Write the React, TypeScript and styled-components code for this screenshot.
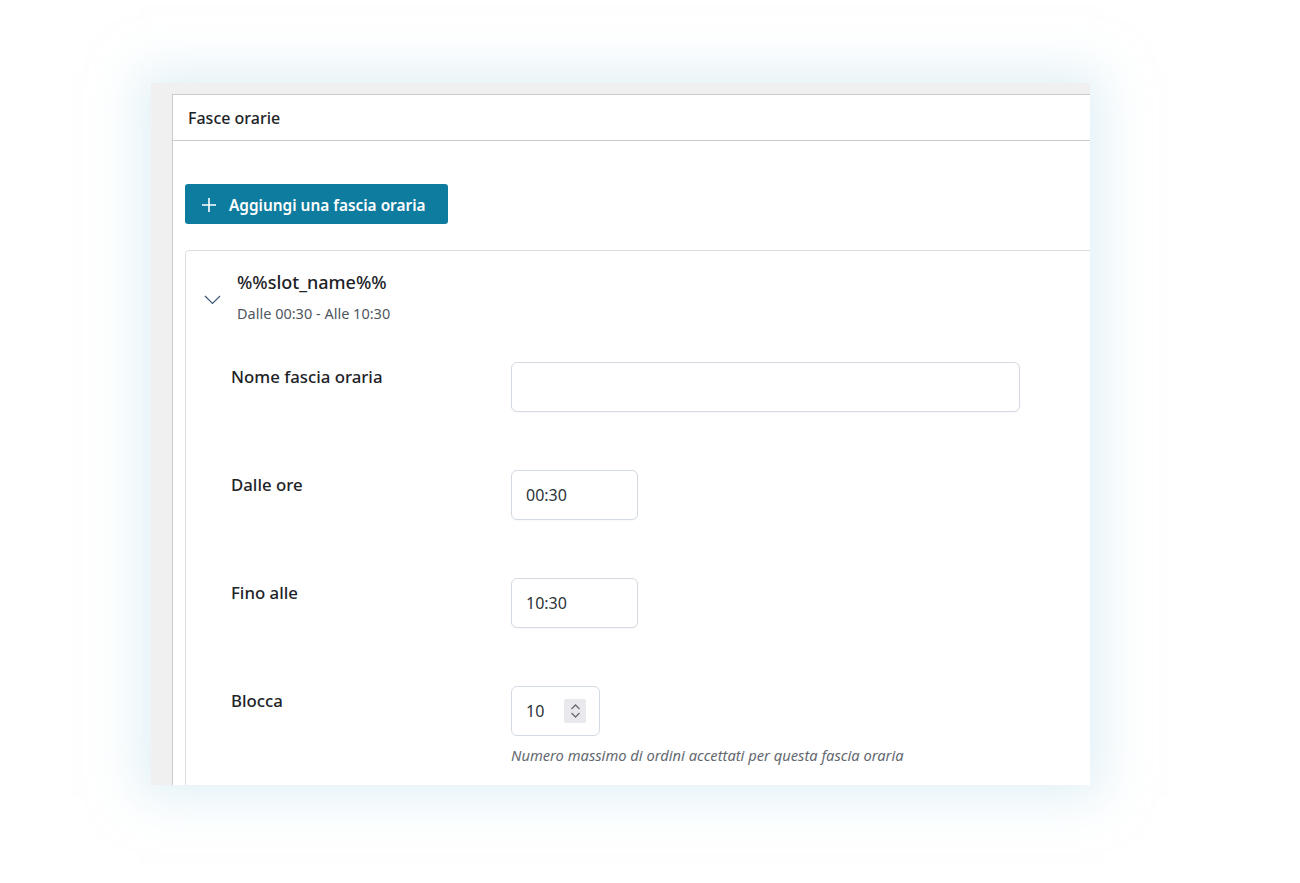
import React from "react";
import styled, { createGlobalStyle } from "styled-components";

const GlobalStyle = createGlobalStyle`
  html, body {
    margin: 0;
    padding: 0;
    background: #ffffff;
  }
  body {
    font-family: "Noto Sans", "Open Sans", sans-serif;
    color: #1d2327;
  }
`;

const Page = styled.div`
  padding: 83px 0 0 151px;
  height: 883px;
  box-sizing: border-box;
`;

const Panel = styled.div`
  width: 939px;
  height: 702px;
  background: #f0f0f1;
  padding: 11px 0 0 21px;
  box-sizing: border-box;
  overflow: hidden;
  box-shadow: 0 0 45px 12px rgba(195, 228, 240, 0.5);
`;

const Box = styled.div`
  width: 1000px;
  height: 100%;
  background: #fff;
  border-top: 1px solid #c9cacc;
  border-left: 1px solid #c9cacc;
`;

const BoxHeader = styled.h2`
  margin: 0;
  height: 46px;
  box-sizing: border-box;
  padding-left: 15px;
  display: flex;
  align-items: center;
  font-size: 16px;
  font-weight: 500;
  border-bottom: 1px solid #c9cacc;
`;

const BoxBody = styled.div`
  padding: 43px 0 0 12px;
`;

const AddButton = styled.button`
  display: flex;
  align-items: center;
  gap: 12px;
  height: 40px;
  width: 263px;
  padding: 2px 0 0 16px;
  border: none;
  border-radius: 3px;
  background: #0e7c9e;
  color: #fff;
  font-family: inherit;
  font-size: 15.4px;
  font-weight: 600;
  cursor: pointer;
`;

const Card = styled.div`
  margin-top: 26px;
  border: 1px solid #dcdee0;
  border-radius: 4px;
  padding: 18px 0 0 18px;
  height: 600px;
`;

const CardHead = styled.div`
  display: flex;
  align-items: center;
  gap: 16px;
`;

const Chevron = styled.span`
  display: flex;
  margin-top: 8px;
  color: #3c5a78;
`;

const TitleBlock = styled.div`
  display: flex;
  flex-direction: column;
  gap: 8px;
`;

const SlotTitle = styled.div`
  font-size: 18px;
  font-weight: 500;
  line-height: 26px;
`;

const SlotSub = styled.div`
  font-size: 14.5px;
  color: #50575e;
  line-height: 20px;
`;

const Fields = styled.div`
  margin-top: 39px;
  padding-left: 27px;
  display: flex;
  flex-direction: column;
  gap: 58px;
`;

const Row = styled.div`
  display: grid;
  grid-template-columns: 280px 1fr;
  align-items: start;
`;

const Label = styled.label`
  font-size: 16.8px;
  font-weight: 500;
  padding-top: 4px;
  line-height: 22px;
`;

const Control = styled.div`
  display: flex;
  flex-direction: column;
  gap: 9px;
`;

const TextInput = styled.input<{ $w: number }>`
  width: ${(p) => p.$w}px;
  height: 50px;
  box-sizing: border-box;
  border: 1px solid #d3dae1;
  border-radius: 6px;
  padding: 0 14px;
  font-family: inherit;
  font-size: 16px;
  color: #2c3338;
  background: #fff;
  box-shadow: 0 1px 2px rgba(0, 0, 0, 0.03);
  outline: none;
`;

const NumberBox = styled.div`
  width: 89px;
  height: 50px;
  box-sizing: border-box;
  border: 1px solid #d3dae1;
  border-radius: 6px;
  display: flex;
  align-items: center;
  padding: 0 13px 0 14px;
  font-size: 16px;
  color: #2c3338;
`;

const NumberValue = styled.input`
  border: none;
  outline: none;
  width: 38px;
  padding: 0;
  font-family: inherit;
  font-size: 16px;
  color: #2c3338;
  background: transparent;
`;

const Spinner = styled.span`
  width: 23px;
  height: 24px;
  background: #e9e9ed;
  border-radius: 2px;
  display: flex;
  align-items: center;
  justify-content: center;
  color: #6b6b75;
`;

const Help = styled.p`
  margin: 0;
  font-size: 14.7px;
  font-style: italic;
  color: #646970;
`;

const fields = [
  { label: "Nome fascia oraria", value: "", width: 509 },
  { label: "Dalle ore", value: "00:30", width: 127 },
  { label: "Fino alle", value: "10:30", width: 127 },
];

export default function App() {
  return (
    <>
      <GlobalStyle />
      <Page>
        <Panel>
          <Box>
            <BoxHeader>Fasce orarie</BoxHeader>
            <BoxBody>
              <AddButton>
                <svg width="16" height="16" viewBox="0 0 16 16" fill="none" stroke="#fff" strokeWidth="1.6">
                  <path d="M8 1v14M1 8h14" />
                </svg>
                Aggiungi una fascia oraria
              </AddButton>
              <Card>
                <CardHead>
                  <Chevron>
                    <svg width="17" height="10" viewBox="0 0 17 10" fill="none" stroke="currentColor" strokeWidth="1.2">
                      <path d="M1 1l7.5 7.5L16 1" />
                    </svg>
                  </Chevron>
                  <TitleBlock>
                    <SlotTitle>%%slot_name%%</SlotTitle>
                    <SlotSub>Dalle 00:30 - Alle 10:30</SlotSub>
                  </TitleBlock>
                </CardHead>
                <Fields>
                  {fields.map((f) => (
                    <Row key={f.label}>
                      <Label>{f.label}</Label>
                      <Control>
                        <TextInput $w={f.width} defaultValue={f.value} />
                      </Control>
                    </Row>
                  ))}
                  <Row>
                    <Label>Blocca</Label>
                    <Control>
                      <NumberBox>
                        <NumberValue defaultValue="10" />
                        <Spinner>
                          <svg width="11" height="16" viewBox="0 0 11 16" fill="none" stroke="currentColor" strokeWidth="1.3">
                            <path d="M1.5 6l4-4 4 4M1.5 10l4 4 4-4" />
                          </svg>
                        </Spinner>
                      </NumberBox>
                      <Help>Numero massimo di ordini accettati per questa fascia oraria</Help>
                    </Control>
                  </Row>
                </Fields>
              </Card>
            </BoxBody>
          </Box>
        </Panel>
      </Page>
    </>
  );
}
